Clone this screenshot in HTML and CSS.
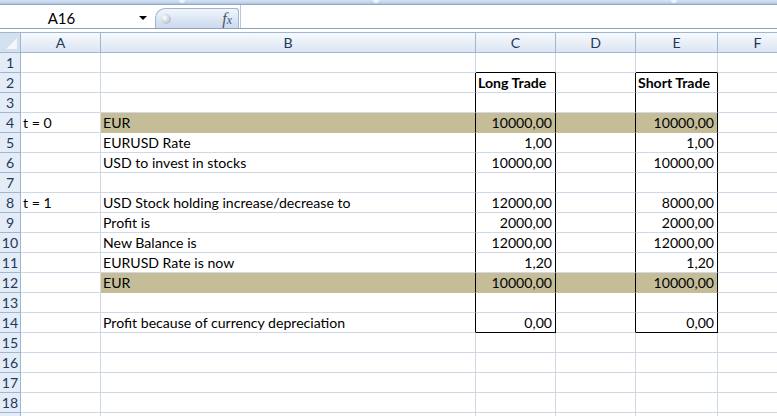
FILE: index.html
```html
<!DOCTYPE html>
<html lang="en">

<head>
  <meta charset="UTF-8">
  <title>Book1 - Currency Trade</title>
  <link rel="stylesheet" href="styles.css">
</head>

<body>
  <div class="ribbon-edge">
    <span class="tab-notch notch-1"></span>
    <span class="tab-notch notch-2"></span>
    <span class="tab-notch notch-3"></span>
  </div>

  <div class="formula-bar">
    <div class="name-box">
      <span class="name">A16</span>
      <span class="drop-arrow"></span>
    </div>
    <div class="fx-pill">
      <span class="knob"></span>
      <span class="fx">f<span class="fx-x">x</span></span>
    </div>
    <div class="formula-input"></div>
  </div>
  <div class="bar-gap"></div>

  <div class="sheet">
    <!-- column headers -->
    <div class="corner"></div>
    <div class="col-head">A</div>
    <div class="col-head">B</div>
    <div class="col-head">C</div>
    <div class="col-head">D</div>
    <div class="col-head">E</div>
    <div class="col-head">F</div>

    <!-- 1 -->
    <div class="row-head">1</div>
    <div class="cell"></div>
    <div class="cell"></div>
    <div class="cell box-top"></div>
    <div class="cell"></div>
    <div class="cell box-top"></div>
    <div class="cell"></div>

    <!-- 2 -->
    <div class="row-head">2</div>
    <div class="cell"></div>
    <div class="cell box-left"></div>
    <div class="cell box-right bold">Long Trade</div>
    <div class="cell box-left"></div>
    <div class="cell box-right bold">Short Trade</div>
    <div class="cell"></div>

    <!-- 3 -->
    <div class="row-head">3</div>
    <div class="cell"></div>
    <div class="cell box-left"></div>
    <div class="cell box-right"></div>
    <div class="cell box-left"></div>
    <div class="cell box-right"></div>
    <div class="cell"></div>

    <!-- 4 -->
    <div class="row-head">4</div>
    <div class="cell">t = 0</div>
    <div class="cell box-left fill">EUR</div>
    <div class="cell box-right fill num">10000,00</div>
    <div class="cell box-left fill"></div>
    <div class="cell box-right fill num">10000,00</div>
    <div class="cell"></div>

    <!-- 5 -->
    <div class="row-head">5</div>
    <div class="cell"></div>
    <div class="cell box-left">EURUSD Rate</div>
    <div class="cell box-right num">1,00</div>
    <div class="cell box-left"></div>
    <div class="cell box-right num">1,00</div>
    <div class="cell"></div>

    <!-- 6 -->
    <div class="row-head">6</div>
    <div class="cell"></div>
    <div class="cell box-left">USD to invest in stocks</div>
    <div class="cell box-right num">10000,00</div>
    <div class="cell box-left"></div>
    <div class="cell box-right num">10000,00</div>
    <div class="cell"></div>

    <!-- 7 -->
    <div class="row-head">7</div>
    <div class="cell"></div>
    <div class="cell box-left"></div>
    <div class="cell box-right"></div>
    <div class="cell box-left"></div>
    <div class="cell box-right"></div>
    <div class="cell"></div>

    <!-- 8 -->
    <div class="row-head">8</div>
    <div class="cell">t = 1</div>
    <div class="cell box-left">USD Stock holding increase/decrease to</div>
    <div class="cell box-right num">12000,00</div>
    <div class="cell box-left"></div>
    <div class="cell box-right num">8000,00</div>
    <div class="cell"></div>

    <!-- 9 -->
    <div class="row-head">9</div>
    <div class="cell"></div>
    <div class="cell box-left">Profit is</div>
    <div class="cell box-right num">2000,00</div>
    <div class="cell box-left"></div>
    <div class="cell box-right num">2000,00</div>
    <div class="cell"></div>

    <!-- 10 -->
    <div class="row-head">10</div>
    <div class="cell"></div>
    <div class="cell box-left">New Balance is</div>
    <div class="cell box-right num">12000,00</div>
    <div class="cell box-left"></div>
    <div class="cell box-right num">12000,00</div>
    <div class="cell"></div>

    <!-- 11 -->
    <div class="row-head">11</div>
    <div class="cell"></div>
    <div class="cell box-left">EURUSD Rate is now</div>
    <div class="cell box-right num">1,20</div>
    <div class="cell box-left"></div>
    <div class="cell box-right num">1,20</div>
    <div class="cell"></div>

    <!-- 12 -->
    <div class="row-head">12</div>
    <div class="cell"></div>
    <div class="cell box-left fill">EUR</div>
    <div class="cell box-right fill num">10000,00</div>
    <div class="cell box-left fill"></div>
    <div class="cell box-right fill num">10000,00</div>
    <div class="cell"></div>

    <!-- 13 -->
    <div class="row-head">13</div>
    <div class="cell"></div>
    <div class="cell box-left"></div>
    <div class="cell box-right"></div>
    <div class="cell box-left"></div>
    <div class="cell box-right"></div>
    <div class="cell"></div>

    <!-- 14 -->
    <div class="row-head">14</div>
    <div class="cell"></div>
    <div class="cell box-left">Profit because of currency depreciation</div>
    <div class="cell box-right box-bottom num">0,00</div>
    <div class="cell box-left"></div>
    <div class="cell box-right box-bottom num">0,00</div>
    <div class="cell"></div>

    <!-- 15 -->
    <div class="row-head">15</div>
    <div class="cell"></div>
    <div class="cell"></div>
    <div class="cell"></div>
    <div class="cell"></div>
    <div class="cell"></div>
    <div class="cell"></div>

    <!-- 16 -->
    <div class="row-head">16</div>
    <div class="cell"></div>
    <div class="cell"></div>
    <div class="cell"></div>
    <div class="cell"></div>
    <div class="cell"></div>
    <div class="cell"></div>

    <!-- 17 -->
    <div class="row-head">17</div>
    <div class="cell"></div>
    <div class="cell"></div>
    <div class="cell"></div>
    <div class="cell"></div>
    <div class="cell"></div>
    <div class="cell"></div>

    <!-- 18 -->
    <div class="row-head">18</div>
    <div class="cell"></div>
    <div class="cell"></div>
    <div class="cell"></div>
    <div class="cell"></div>
    <div class="cell"></div>
    <div class="cell"></div>

    <!-- 19: only its top edge is in view -->
    <div class="row-head"></div>
    <div class="cell"></div>
    <div class="cell"></div>
    <div class="cell"></div>
    <div class="cell"></div>
    <div class="cell"></div>
    <div class="cell"></div>
  </div>
</body>

</html>
```

FILE: styles.css
```css
:root {
  --grid-line: #d0d7e5;
  --head-line: #9eb6ce;
  --head-bg: #e4ecf7;
  --head-text: #1e395b;
  --fill-tan: #c4bd97;
  --box-line: #000000;
}

body {
  margin: 0;
  padding: 0;
  width: 777px;
  height: 416px;
  overflow: hidden;
  background-color: #ffffff;
  font-family: Lato, 'Liberation Sans', sans-serif;
  font-size: 14.1px;
  color: #000000;
}

/* bottom edge of the ribbon */
.ribbon-edge {
  position: relative;
  height: 5px;
  background: linear-gradient(to bottom, #d5e2f2, #c2d5ec 60%, #a9c1df);
  border-bottom: 1px solid #8fa9c9;
  box-sizing: border-box;
}

.tab-notch {
  position: absolute;
  top: 0;
  width: 6px;
  height: 3px;
  background-color: #eef4fb;
  border-radius: 0 0 3px 3px;
}

.notch-1 { left: 179px; }
.notch-2 { left: 373px; }
.notch-3 { left: 671px; }

/* formula bar */
.formula-bar {
  display: flex;
  height: 23px;
  background-color: #ffffff;
  border-bottom: 1px solid #8ea3bd;
}

.name-box {
  display: flex;
  align-items: center;
  width: 155px;
  flex-shrink: 0;
}

.name {
  flex: 1;
  text-align: center;
  padding-right: 10px;
  padding-top: 2px;
  font-size: 15px;
}

.drop-arrow {
  width: 0;
  height: 0;
  margin: 3px 8px 0 6px;
  border-left: 4px solid transparent;
  border-right: 4px solid transparent;
  border-top: 4px solid #000000;
}

.fx-pill {
  display: flex;
  align-items: center;
  justify-content: space-between;
  width: 84px;
  height: 20px;
  margin-top: 3px;
  padding: 0 4px 0 5px;
  box-sizing: border-box;
  border: 1px solid #9fb4ce;
  border-bottom: none;
  border-radius: 10px 3px 0 0;
  background: linear-gradient(to bottom, #f1f6fc, #dbe6f4 55%, #cbdaee);
}

.knob {
  width: 10px;
  height: 10px;
  border-radius: 50%;
  background: radial-gradient(circle at 35% 35%, #ffffff, #c6ccd4 60%, #9aa4b1);
}

.fx {
  font-family: 'Liberation Serif', serif;
  font-style: italic;
  font-size: 16px;
  color: #4a5668;
  padding-right: 2px;
}

.fx-x {
  font-size: 12px;
}

.formula-input {
  flex: 1;
  margin-left: 1px;
  border-left: 1px solid #b8c8dc;
}

.bar-gap {
  height: 3px;
  background-color: #ffffff;
}

/* worksheet grid */
.sheet {
  display: grid;
  grid-template-columns: 21px 80px 375px 80px 80px 82px 80px;
  grid-template-rows: 20px;
  grid-auto-rows: 20px;
  border-top: 1px solid var(--head-line);
}

.sheet > div {
  box-sizing: border-box;
  border-right: 1px solid var(--grid-line);
  border-bottom: 1px solid var(--grid-line);
  padding: 0 2px;
  line-height: 19px;
  white-space: nowrap;
}

.sheet > .corner {
  position: relative;
  background-color: #d3e0f0;
  border-right-color: var(--head-line);
  border-bottom-color: var(--head-line);
}

.corner::after {
  content: "";
  position: absolute;
  right: 3px;
  bottom: 3px;
  width: 0;
  height: 0;
  border-left: 11px solid transparent;
  border-bottom: 11px solid #f3f7fb;
}

.sheet > .col-head {
  text-align: center;
  line-height: 19px;
  color: var(--head-text);
  background: linear-gradient(to bottom, #f7f9fd, #e9eff8 50%, #dce5f2);
  border-right-color: var(--head-line);
  border-bottom-color: var(--head-line);
}

.sheet > .row-head {
  padding: 0;
  text-align: center;
  color: var(--head-text);
  background-color: var(--head-bg);
  border-right-color: var(--head-line);
  border-bottom-color: var(--head-line);
}

.sheet > .num {
  text-align: right;
  padding-right: 3px;
}

.sheet > .bold {
  font-weight: bold;
}

.sheet > .fill {
  background-color: var(--fill-tan);
  border-bottom-color: transparent;
}

.sheet > .box-left,
.sheet > .box-right {
  border-right-color: var(--box-line);
}

.sheet > .box-top,
.sheet > .box-bottom {
  border-bottom-color: var(--box-line);
}
```
